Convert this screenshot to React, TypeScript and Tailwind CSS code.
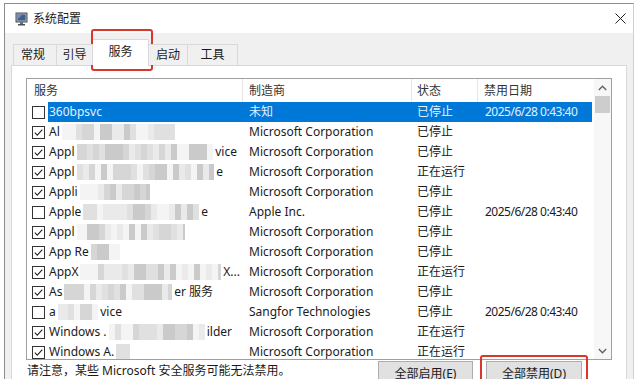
import React from 'react';

type Row = {
  checked: boolean;
  pre: string;
  suf?: string;
  tail: string;
  mosaic: boolean;
  mfr: string;
  status: string;
  date?: string;
  selected?: boolean;
};

const rows: Row[] = [
  { checked: false, pre: '360bpsvc', tail: 'w-[0px]', mosaic: false, mfr: '未知', status: '已停止', date: '2025/6/28 0:43:40', selected: true },
  { checked: true, pre: 'Al', tail: 'w-[68px]', mosaic: true, mfr: 'Microsoft Corporation', status: '已停止' },
  { checked: true, pre: 'Appl', suf: 'vice', tail: 'w-[6px]', mosaic: true, mfr: 'Microsoft Corporation', status: '已停止' },
  { checked: true, pre: 'Appl', suf: 'e', tail: 'w-[20px]', mosaic: true, mfr: 'Microsoft Corporation', status: '正在运行' },
  { checked: true, pre: 'Appli', tail: 'w-[93px]', mosaic: true, mfr: 'Microsoft Corporation', status: '已停止' },
  { checked: false, pre: 'Apple', suf: 'e', tail: 'w-[35px]', mosaic: true, mfr: 'Apple Inc.', status: '已停止', date: '2025/6/28 0:43:40' },
  { checked: true, pre: 'Appl', tail: 'w-[58px]', mosaic: true, mfr: 'Microsoft Corporation', status: '已停止' },
  { checked: true, pre: 'App Re', tail: 'w-[123px]', mosaic: true, mfr: 'Microsoft Corporation', status: '已停止' },
  { checked: true, pre: 'AppX', suf: 'X...', tail: 'w-[3px]', mosaic: true, mfr: 'Microsoft Corporation', status: '正在运行' },
  { checked: true, pre: 'As', suf: 'er 服务', tail: 'w-[30px]', mosaic: true, mfr: 'Microsoft Corporation', status: '已停止' },
  { checked: false, pre: 'a', suf: 'vice', tail: 'w-[121px]', mosaic: true, mfr: 'Sangfor Technologies', status: '已停止', date: '2025/6/28 0:43:40' },
  { checked: true, pre: 'Windows .', suf: 'ilder', tail: 'w-[11px]', mosaic: true, mfr: 'Microsoft Corporation', status: '正在运行' },
  { checked: true, pre: 'Windows A.', tail: 'w-[113px]', mosaic: true, mfr: 'Microsoft Corporation', status: '正在运行' },
];

const SH = ['bg-[#cacaca]', 'bg-[#d6d6d6]', 'bg-[#e0e0e0]', 'bg-[#eaeaea]', 'bg-[#f4f4f4]'];

function Mosaic({ seed }: { seed: number }) {
  const blocks: React.ReactNode[] = [];
  let s = seed * 7919 + 101;
  for (let i = 0; i < 26; i++) {
    s = (s * 1103515245 + 12345) & 0x7fffffff;
    const w = 6 + (s % 4) * 4;
    const sh = SH[(s >> 9) % 5];
    blocks.push(<span key={i} className={'h-full shrink-0 ' + sh} style={{ width: w }} />);
  }
  return <span className="ml-[2px] flex h-[16px] min-w-0 flex-1 overflow-hidden">{blocks}</span>;
}

function Check({ checked }: { checked: boolean }) {
  return (
    <span className="flex h-[13px] w-[13px] items-center justify-center border border-[#333] bg-white">
      {checked && (
        <svg width="11" height="11" viewBox="0 0 11 11">
          <path d="M1.8 5.6 L4.3 8.1 L9.3 2.6" fill="none" stroke="#222" strokeWidth="1.1" />
        </svg>
      )}
    </span>
  );
}

function AppIcon() {
  return (
    <svg width="13" height="14" viewBox="0 0 13 14">
      <rect x="1" y="1" width="11" height="9" fill="#a9b3bd" stroke="#4a4f55" strokeWidth="1" />
      <rect x="2.5" y="2.5" width="8" height="6" fill="#3d5f8c" />
      <path d="M3 3 L7 3 L3 7 Z" fill="#6f8fb8" />
      <rect x="5" y="10" width="3" height="2" fill="#6b7077" />
      <rect x="3" y="12" width="7" height="1.5" fill="#4a4f55" />
    </svg>
  );
}

export default function App() {
  return (
    <div className="relative h-[379px] w-[640px] overflow-hidden bg-white pl-[4px] pt-[3px] text-[12px] text-[#1b1b1b] [font-family:'Noto_Sans','Noto_Sans_CJK_SC',sans-serif]">
      <div className="flex h-[400px] w-[630px] flex-col border-l border-r border-t border-l-[#8c8c8c] border-r-[#d0d0d0] border-t-[#8c8c8c]">
        {/* title bar */}
        <div className="flex h-[29px] shrink-0 items-center bg-white">
          <span className="ml-[10px] flex h-[14px] w-[14px] items-center">
            <AppIcon />
          </span>
          <span className="ml-[4px] text-[12px] leading-none text-[#1b1b1b]">系统配置</span>
          <span className="ml-auto mr-[6px] flex h-[14px] w-[14px] items-center justify-center">
            <svg width="11" height="11" viewBox="0 0 11 11">
              <path d="M0.5 0.5 L10.5 10.5 M10.5 0.5 L0.5 10.5" stroke="#222" strokeWidth="1" />
            </svg>
          </span>
        </div>
        {/* body */}
        <div className="flex flex-1 flex-col bg-[#f0f0f0] pt-[6px]">
          {/* tabs */}
          <div className="relative z-10 ml-[8px] flex h-[26px] items-end">
            <div className="flex h-[21px] w-[44px] items-center justify-center border border-b-0 border-[#d9d9d9] bg-[#f0f0f0] pr-[4px]">常规</div>
            <div className="flex h-[21px] w-[36px] items-center justify-center border border-b-0 border-l-0 border-[#d9d9d9] bg-[#f0f0f0]">引导</div>
            <div className="-mb-[1px] flex h-[27px] w-[56px] items-center justify-center border border-b-0 border-l-0 border-[#d9d9d9] bg-white pb-[2px]">服务</div>
            <div className="flex h-[21px] w-[39px] items-center justify-center border border-b-0 border-l-0 border-[#d9d9d9] bg-[#f0f0f0]">启动</div>
            <div className="flex h-[21px] w-[50px] items-center justify-center border border-b-0 border-l-0 border-[#d9d9d9] bg-[#f0f0f0]">工具</div>
          </div>
          {/* panel */}
          <div className="ml-[6px] flex w-[616px] flex-1 flex-col border border-[#d9d9d9] bg-white pl-[14px] pt-[12px]">
            {/* list */}
            <div className="flex h-[282px] w-[586px] border border-[#a0a0a0]">
              <div className="flex w-[565px] flex-col overflow-hidden">
                <div className="flex h-[23px] shrink-0 items-center text-[#333]">
                  <div className="flex h-full w-[216px] items-center border-r border-[#e5e5e5] pl-[7px]">服务</div>
                  <div className="flex h-full w-[169px] items-center border-r border-[#e5e5e5] pl-[6px]">制造商</div>
                  <div className="flex h-full w-[66px] items-center border-r border-[#e5e5e5] pl-[5px]">状态</div>
                  <div className="flex h-full w-[114px] items-center pl-[6px]">禁用日期</div>
                </div>
                {rows.map((r, i) => {
                  const sel = !!r.selected;
                  const tc = sel ? 'text-[#e2f1ff]' : 'text-[#1b1b1b]';
                  return (
                    <div key={i} className="flex h-[20px] shrink-0 items-center">
                      <div className="flex h-full w-[21px] shrink-0 items-center pl-[5px]">
                        <Check checked={r.checked} />
                      </div>
                      <div className={'flex h-full flex-1 items-center ' + (sel ? 'bg-[#0078d7] ' : '') + tc}>
                        <div className="flex h-full w-[195px] shrink-0 items-center pl-[1px]">
                          <span className="shrink-0 whitespace-pre">{r.pre}</span>
                          {r.mosaic ? <Mosaic seed={i + 3} /> : <span className="flex-1" />}
                          {r.suf && <span className="ml-[2px] shrink-0 whitespace-pre">{r.suf}</span>}
                          <span className={'h-full shrink-0 ' + r.tail} />
                        </div>
                        <div className="flex h-full w-[169px] shrink-0 items-center pl-[6px] whitespace-nowrap">{r.mfr}</div>
                        <div className="flex h-full w-[66px] shrink-0 items-center pl-[5px] whitespace-nowrap">{r.status}</div>
                        <div className="flex h-full w-[114px] shrink-0 items-center pl-[7px] tracking-[-0.5px] whitespace-nowrap">{r.date ?? ''}</div>
                      </div>
                    </div>
                  );
                })}
              </div>
              <div className="w-[2px]" />
              {/* scrollbar */}
              <div className="flex w-[17px] flex-col items-center bg-[#f7f7f7]">
                <div className="flex h-[17px] w-full items-center justify-center">
                  <svg width="9" height="6" viewBox="0 0 9 6">
                    <path d="M0.8 5 L4.5 1.2 L8.2 5" fill="none" stroke="#606060" strokeWidth="1.3" />
                  </svg>
                </div>
                <div className="h-[17px] w-[15px] bg-[#cdcdcd]" />
                <div className="flex-1" />
                <div className="flex h-[17px] w-full items-center justify-center">
                  <svg width="9" height="6" viewBox="0 0 9 6">
                    <path d="M0.8 1 L4.5 4.8 L8.2 1" fill="none" stroke="#606060" strokeWidth="1.3" />
                  </svg>
                </div>
              </div>
            </div>
            {/* bottom row */}
            <div className="mt-[1px] flex items-start">
              <span className="mt-[2px] pl-[1px] leading-[16px]">请注意，某些 Microsoft 安全服务可能无法禁用。</span>
              <button className="ml-auto flex h-[27px] w-[95px] items-start justify-center border border-[#adadad] bg-[#e1e1e1] pt-[4px] leading-[16px]">全部启用(E)</button>
              <button className="ml-[13px] mr-[44px] flex h-[27px] w-[96px] items-start justify-center border border-[#adadad] bg-[#e1e1e1] pt-[4px] leading-[16px]">全部禁用(D)</button>
            </div>
          </div>
        </div>
      </div>
      {/* annotations */}
      <div className="absolute left-[91px] top-[29px] h-[42px] w-[62px] rounded-[3px] border-2 border-[#d8372c]" />
      <div className="absolute left-[480px] top-[355px] h-[40px] w-[108px] rounded-[3px] border-2 border-[#d8372c]" />
    </div>
  );
}
